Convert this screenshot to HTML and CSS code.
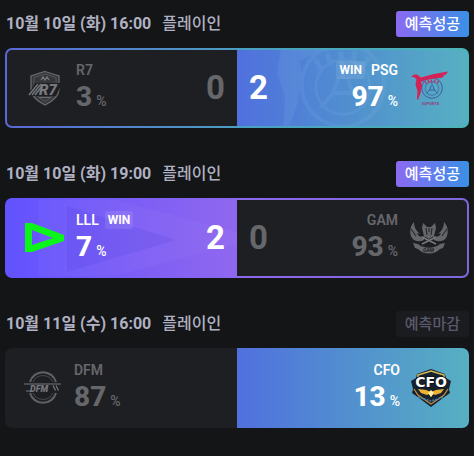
FILE: index.html
```html
<!DOCTYPE html>
<html lang="ko">
<head>
<meta charset="utf-8">
<meta name="viewport" content="width=device-width, initial-scale=1">
<title>플레이인</title>
<link rel="stylesheet" href="styles.css">
</head>
<body>
<svg class="defs" aria-hidden="true">
  <symbol id="psg" viewBox="0 0 40 40">
    <g fill="none" stroke="currentColor">
      <circle cx="23" cy="20" r="10.3" stroke-width="1"/>
      <circle cx="23" cy="20.500" r="6.800" stroke-width=".7"/>
      <path d="M23 14.500v4M22 18l-1.500 4-3 3.500M24 18l1.500 4 3 3.500M20.500 22h5" stroke-width="1"/>
    </g>
  </symbol>
  <symbol id="bird" viewBox="0 0 40 40">
    <path fill="currentColor" d="M2 9L5 6.500l3 0 4 3L25 6 39 3.500 37 6.500l-3.500 1.500 2 .5-4 1.500-6 .5-9 1.500-4.500 2 1 4-1.500 7-2.500 7-1-1 .5-8-2-6 1-6-3-2z"/>
    <path fill="none" stroke="currentColor" stroke-width="1.300" d="M16 13.500l1.500 2.500M19 12l1 3M22.500 11.500v3M26 11.500l-.5 3M29.500 13l-1.500 2.500"/>
  </symbol>
</svg>
<main class="matches">
  <section class="match">
    <header class="head">
      <h2 class="when"><time class="date">10월 10일 (화) 16:00</time><span class="stage">플레이인</span></h2>
      <span class="status hit">예측성공</span>
    </header>
    <div class="card framed blue">
      <div class="team dim">
        <svg class="logo" viewBox="0 0 40 40" aria-hidden="true">
          <path d="M20 3.500L34 8v13c0 7-6 12-14 16C12 33 6 28 6 21V8z" fill="#36373b" stroke="#696a6e" stroke-width="1.300"/>
          <path d="M20 6l11 3.500V20c0 6-5 10-11 13.500C14 30 9 26 9 20V9.500z" fill="none" stroke="#55565a" stroke-width="1"/>
          <path d="M16 12l2-3 2 3 2-3 2 3" fill="none" stroke="#77787c" stroke-width="1.300"/>
          <path d="M10 15h27l-6 13H3z" fill="#1e1f24"/>
          <path d="M4 27l9-11M7 27l9-11M10 27l8-10" stroke="#747579" stroke-width="1.500"/>
          <text class="mark" x="14" y="27" font-size="15" fill="#77787c">R7</text>
          <path d="M14 29.500h12" stroke="#696a6e"/>
        </svg>
        <div class="info">
          <div class="name">R7</div>
          <div class="share"><b>3</b><span>%</span></div>
        </div>
        <strong class="score">0</strong>
      </div>
      <div class="team away win">
        <svg class="ghost psg-ghost" viewBox="0 0 160 76" aria-hidden="true">
          <use href="#psg" x="-16" y="-45" width="160" height="160"/>
          <use href="#bird" x="-16" y="-45" width="160" height="160"/>
        </svg>
        <svg class="logo" viewBox="0 0 40 40" aria-hidden="true">
          <use class="navy" href="#psg"/>
          <use class="red" href="#bird"/>
          <text class="mark" x="13" y="37" font-size="4" fill="#8d4783">ESPORTS</text>
        </svg>
        <div class="info">
          <div class="name">PSG<span class="badge">WIN</span></div>
          <div class="share"><b>97</b><span>%</span></div>
        </div>
        <strong class="score">2</strong>
      </div>
    </div>
  </section>

  <section class="match">
    <header class="head">
      <h2 class="when"><time class="date">10월 10일 (화) 19:00</time><span class="stage">플레이인</span></h2>
      <span class="status hit">예측성공</span>
    </header>
    <div class="card framed violet">
      <div class="team win">
        <svg class="ghost lll-ghost" viewBox="0 0 230 76" preserveAspectRatio="xMinYMid slice" aria-hidden="true">
          <path d="M32-20L230 32v12L32 96z" fill="#fff" opacity=".03"/>
          <path d="M60 6l109 34L60 72z" fill="#4038d8" opacity=".14"/>
        </svg>
        <svg class="logo" viewBox="0 0 40 40" aria-hidden="true">
          <path fill="#0cf51a" fill-rule="evenodd" d="M0 5h7l32 12v6L7 34H0zM7 12v15l21-7z"/>
        </svg>
        <div class="info">
          <div class="name">LLL<span class="badge">WIN</span></div>
          <div class="share"><b>7</b><span>%</span></div>
        </div>
        <strong class="score">2</strong>
      </div>
      <div class="team away dim">
        <svg class="logo" viewBox="0 0 40 40" aria-hidden="true">
          <g fill="#65666a">
            <path d="M5 4C1 8 0 15 3 20c3 4 8 4 12 2l1-4c-4 2-7 0-8-3l3 1C7 13 5 9 5 4z"/>
            <path d="M35 4c4 4 5 11 2 16-3 4-8 4-12 2l-1-4c4 2 7 0 8-3l-3 1c4-3 6-7 6-12z"/>
            <path d="M14 5l4 4h4l4-4 1 5-2 8-5 3-5-3-2-8z"/>
            <path d="M4 25l5 1c6 5 16 5 22 0l5-1-2 5-3 1c-6 6-16 6-22 0l-3-1z"/>
          </g>
          <path d="M17 10l1 7M23 10l-1 7M20 10v4M2 11l5 7M38 11l-5 7" stroke="#292a2f" stroke-width="1.200"/>
          <path d="M13 26l14-7M27 26l-14-7" stroke="#77787c" stroke-width="1.500"/>
          <text class="mark" x="14" y="34" font-size="5" fill="#25262b">GAM</text>
        </svg>
        <div class="info">
          <div class="name">GAM</div>
          <div class="share"><b>93</b><span>%</span></div>
        </div>
        <strong class="score">0</strong>
      </div>
    </div>
  </section>

  <section class="match">
    <header class="head">
      <h2 class="when"><time class="date">10월 11일 (수) 16:00</time><span class="stage">플레이인</span></h2>
      <span class="status closed">예측마감</span>
    </header>
    <div class="card">
      <div class="team dim">
        <svg class="logo" viewBox="0 0 40 40" aria-hidden="true">
          <path d="M7 14a13.500 13.500 0 0 1 26 0M7 25a13.500 13.500 0 0 0 26 0" fill="none" stroke="#606165" stroke-width="2"/>
          <path d="M10 14a11 11 0 0 1 20 0M10 25a11 11 0 0 0 20 0" fill="none" stroke="#47484c"/>
          <path d="M1 16h37M3 23h5M33 17.500l2.500 5M30 17.500l2.500 5" fill="none" stroke="#77787c" stroke-width="1.200"/>
          <text class="mark" x="7" y="23.500" font-size="9" fill="#77787c">DFM</text>
        </svg>
        <div class="info">
          <div class="name">DFM</div>
          <div class="share"><b>87</b><span>%</span></div>
        </div>
      </div>
      <div class="team away win">
        <svg class="logo" viewBox="0 0 40 40" aria-hidden="true">
          <path d="M20 1l14 5 1 4 5 3-2 8 1 4-7 5-12 9-12-9-7-5 1-4-2-8 5-3 1-4z" fill="#18222e"/>
          <path d="M7 9V7l13-4 13 4v2" fill="none" stroke="#d4bc55" stroke-width="1.600"/>
          <path d="M3 21l4 6 13 9 13-9 4-6" fill="none" stroke="#c58a43" stroke-width="1.300"/>
          <path d="M7 29l13 4 13-4" fill="none" stroke="#4582ad" stroke-width="1.500" stroke-dasharray="2 1"/>
          <path d="M7 21l8 1 5 2 5-2 8-1-3 4-6 2-2-1-2 3-2-3-2 1-6-2z" fill="#edb233"/>
          <path d="M20 22l3 3-3 4-3-4z" fill="#fff0a0"/>
          <text class="slab" x="20" y="19" font-size="14" text-anchor="middle" fill="#fff" stroke="#10151d" stroke-width="2" paint-order="stroke">CFO</text>
        </svg>
        <div class="info">
          <div class="name">CFO</div>
          <div class="share"><b>13</b><span>%</span></div>
        </div>
      </div>
    </div>
  </section>
</main>
</body>
</html>
```
FILE: styles.css
```css
* {
  box-sizing: border-box;
}

body {
  margin: 0;
  background: #141517;
  color: #fff;
  font-family: Roboto, "Noto Sans CJK KR", sans-serif;
}

.defs {
  position: absolute;
  width: 0;
  height: 0;
}

.matches {
  display: flex;
  flex-direction: column;
  gap: 33px;
  padding: 11px 5px;
}

.match {
  display: flex;
  flex-direction: column;
  gap: 11px;
}

.head {
  display: flex;
  align-items: center;
  justify-content: space-between;
  height: 26px;
}

.when {
  display: flex;
  gap: 11px;
  margin: 0;
  padding-left: 1px;
  color: #b0b1c2;
  font-size: 16px;
  line-height: 26px;
}

.date {
  font-weight: 700;
}

.stage {
  font-weight: 500;
}

.status {
  padding: 0 9px;
  border-radius: 3px;
  font-size: 15px;
  font-weight: 500;
  line-height: 26px;
}

.hit {
  background: linear-gradient(90deg, #8b6af2, #3a8fe6);
}

.closed {
  background: #1b1c20;
  color: #5b5a6c;
}

.card {
  display: grid;
  grid-template-columns: 1fr 1fr;
  height: 80px;
  border-radius: 7px;
  overflow: hidden;
}

.framed {
  padding: 2px;
}

.blue {
  background: linear-gradient(90deg, #5b68d6, #4a9fc2 50%, #4bb5b8);
}

.violet {
  background: linear-gradient(90deg, #6253ff, #8d68ee 50%, #7d68dc);
}

.team {
  position: relative;
  display: flex;
  align-items: center;
  gap: 11px;
  padding: 0 12px 0 18px;
}

.away {
  flex-direction: row-reverse;
  padding: 0 18px 0 12px;
}

.dim {
  background: #1e1f23;
  color: #66676b;
}

.framed .team:first-child {
  border-radius: 5px 0 0 5px;
}

.framed .team:last-child {
  border-radius: 0 5px 5px 0;
}

.win {
  background: linear-gradient(90deg, #5070de, #5290cf 50%, #56b0c2);
}

.violet .win {
  background: linear-gradient(90deg, #6253ff, #7a5cf6 50%, #9068ef);
}

.logo {
  position: relative;
  flex: none;
  width: 40px;
  height: 40px;
}

.navy {
  color: #3f5f9d;
}

.red {
  color: #d32258;
}

.mark {
  font-family: Roboto, sans-serif;
  font-style: italic;
  font-weight: 900;
}

.slab {
  font-family: "DejaVu Sans", sans-serif;
  font-weight: 700;
}

.ghost {
  position: absolute;
  top: 0;
  height: 100%;
}

.psg-ghost {
  right: 40px;
  width: 160px;
  color: #7db4e6;
  opacity: .14;
}

.lll-ghost {
  left: 0;
  width: 100%;
}

.info {
  position: relative;
  display: flex;
  flex-direction: column;
  gap: 3px;
}

.name {
  display: flex;
  align-items: center;
  gap: 6px;
  font-size: 14px;
  font-weight: 600;
  line-height: 18px;
}

.away .name {
  flex-direction: row-reverse;
}

.badge {
  padding: 0 3px;
  border-radius: 3px;
  background: rgb(255 255 255 / 10%);
  font-size: 12px;
  font-weight: 700;
}

.share {
  display: flex;
  align-items: baseline;
  gap: 4px;
  font-size: 14px;
  font-weight: 500;
  line-height: 30px;
}

.share b {
  font-size: 28px;
  font-weight: 800;
}

.away .share {
  justify-content: flex-end;
}

.score {
  position: relative;
  margin-left: auto;
  font-size: 33px;
  font-weight: 700;
  line-height: 40px;
}

.away .score {
  margin: 0 auto 0 0;
}
```
